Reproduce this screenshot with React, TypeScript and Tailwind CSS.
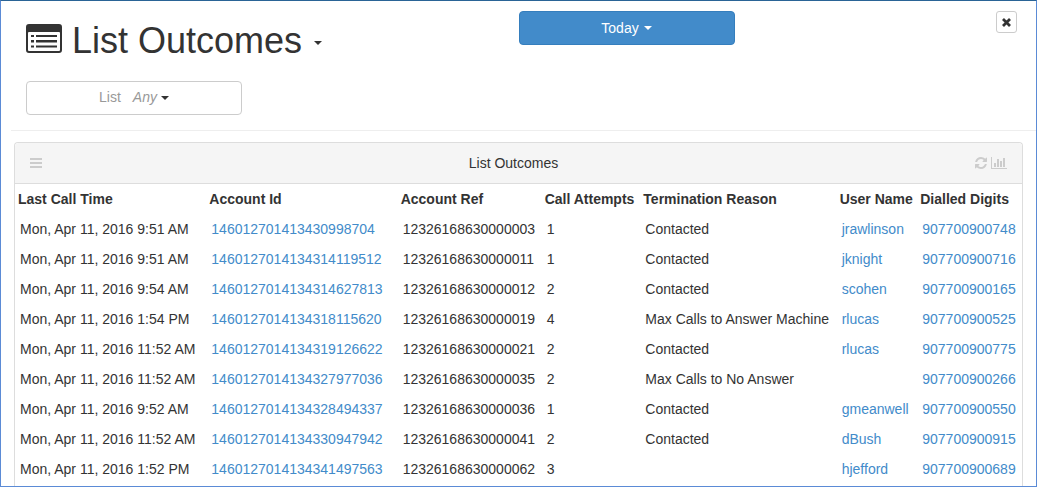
import React from 'react';

interface Outcome {
  time: string;
  accountId: string;
  accountRef: string;
  attempts: number;
  reason: string;
  user: string;
  digits: string;
}

const outcomes: Outcome[] = [
  { time: 'Mon, Apr 11, 2016 9:51 AM', accountId: '146012701413430998704', accountRef: '12326168630000003', attempts: 1, reason: 'Contacted', user: 'jrawlinson', digits: '907700900748' },
  { time: 'Mon, Apr 11, 2016 9:51 AM', accountId: '1460127014134314119512', accountRef: '12326168630000011', attempts: 1, reason: 'Contacted', user: 'jknight', digits: '907700900716' },
  { time: 'Mon, Apr 11, 2016 9:54 AM', accountId: '1460127014134314627813', accountRef: '12326168630000012', attempts: 2, reason: 'Contacted', user: 'scohen', digits: '907700900165' },
  { time: 'Mon, Apr 11, 2016 1:54 PM', accountId: '1460127014134318115620', accountRef: '12326168630000019', attempts: 4, reason: 'Max Calls to Answer Machine', user: 'rlucas', digits: '907700900525' },
  { time: 'Mon, Apr 11, 2016 11:52 AM', accountId: '1460127014134319126622', accountRef: '12326168630000021', attempts: 2, reason: 'Contacted', user: 'rlucas', digits: '907700900775' },
  { time: 'Mon, Apr 11, 2016 11:52 AM', accountId: '1460127014134327977036', accountRef: '12326168630000035', attempts: 2, reason: 'Max Calls to No Answer', user: '', digits: '907700900266' },
  { time: 'Mon, Apr 11, 2016 9:52 AM', accountId: '1460127014134328494337', accountRef: '12326168630000036', attempts: 1, reason: 'Contacted', user: 'gmeanwell', digits: '907700900550' },
  { time: 'Mon, Apr 11, 2016 11:52 AM', accountId: '1460127014134330947942', accountRef: '12326168630000041', attempts: 2, reason: 'Contacted', user: 'dBush', digits: '907700900915' },
  { time: 'Mon, Apr 11, 2016 1:52 PM', accountId: '1460127014134341497563', accountRef: '12326168630000062', attempts: 3, reason: '', user: 'hjefford', digits: '907700900689' },
];

const columns = [
  { label: 'Last Call Time', width: 'w-[19%]' },
  { label: 'Account Id', width: 'w-[19%]' },
  { label: 'Account Ref', width: 'w-[14.3%]' },
  { label: 'Call Attempts', width: 'w-[9.8%]' },
  { label: 'Termination Reason', width: 'w-[19.5%]' },
  { label: 'User Name', width: 'w-[8%]' },
  { label: 'Dialled Digits', width: 'w-[10.4%]' },
];

const Caret = () => (
  <svg className="shrink-0" width="8" height="4" viewBox="0 0 8 4" fill="currentColor" aria-hidden="true">
    <path d="M0 0h8L4 4z" />
  </svg>
);

const ListIcon = () => (
  <svg className="shrink-0 mb-[5px]" width="36" height="29" viewBox="0 0 36 29" fill="currentColor" aria-hidden="true">
    <path fillRule="evenodd" d="M3 0h30a3 3 0 0 1 3 3v23a3 3 0 0 1-3 3H3a3 3 0 0 1-3-3V3a3 3 0 0 1 3-3zM3 8a1 1 0 0 0-1 1v17a1 1 0 0 0 1 1h30a1 1 0 0 0 1-1V9a1 1 0 0 0-1-1z" />
    <path d="M5 11h3v2H5zM10 11h21v2H10zM5 16h3v2.5H5zM10 16h21v2.5H10zM5 21.500h3v2H5zM10 21.500h21v2H10z" />
  </svg>
);

const RefreshIcon = () => (
  <svg width="12" height="12" viewBox="0 0 1536 1536" fill="currentColor" aria-hidden="true">
    <path d="M1511 928q0 5-1 7-64 268-268 434.500t-478 166.500q-146 0-282.500-55t-243.500-157l-129 129q-19 19-45 19t-45-19-19-45v-448q0-26 19-45t45-19h448q26 0 45 19t19 45-19 45l-137 137q71 66 161 102t187 36q134 0 250-65t186-179q11-17 53-117 8-23 30-23h192q13 0 22.500 9.500t9.500 22.500zm25-800v448q0 26-19 45t-45 19h-448q-26 0-45-19t-19-45 19-45l138-138q-148-137-349-137-134 0-250 65t-186 179q-11 17-53 117-8 23-30 23h-199q-13 0-22.500-9.500t-9.500-22.500v-7q65-268 270-434.500t480-166.500q146 0 284 55.500t245 156.500l130-129q19-19 45-19t45 19 19 45z" />
  </svg>
);

const ChartIcon = () => (
  <svg width="16" height="12" viewBox="0 0 16 12" fill="currentColor" aria-hidden="true">
    <path d="M0 0h1v11h15v1H0zM3 6h2v4H3zM6 2h2v8H6zM9 4h2v6H9zM12 1h2v9h-2z" />
  </svg>
);

const MenuIcon = () => (
  <svg width="12" height="10" viewBox="0 0 12 10" fill="currentColor" aria-hidden="true">
    <path d="M0 0h12v2H0zM0 4h12v2H0zM0 8h12v2H0z" />
  </svg>
);

const CloseIcon = () => (
  <svg width="9" height="9" viewBox="0 0 9 9" stroke="currentColor" strokeWidth="2.800" aria-hidden="true">
    <path d="M1 1l7 7M8 1l-7 7" />
  </svg>
);

const CellLink = ({ text }: { text: string }) => (
  <a href="#" className="text-[#428bca] hover:underline">{text}</a>
);

export default function App() {
  return (
    <div className="bg-white font-['Liberation_Sans',Arial,sans-serif] text-sm leading-5 text-[#333]">
      <div className="border border-[#5b8bd6] border-t-[#2a6496]">
        <header className="grid grid-cols-2 pt-[10px]">
          <div className="flex items-center gap-[10px] pl-[25px] h-[60px]">
            <ListIcon />
            <h1 className="text-4xl leading-10 whitespace-nowrap">List Outcomes</h1>
            <button type="button" aria-label="Choose report" className="pt-1 pl-[2px]">
              <Caret />
            </button>
          </div>
          <div className="flex items-start justify-between pr-[19px]">
            <button type="button" className="flex items-center justify-center gap-[5px] w-[216px] h-[34px] rounded border border-[#357ebd] bg-[#428bca] text-white">
              Today <Caret />
            </button>
            <button type="button" aria-label="Close" className="flex items-center justify-center w-[21px] h-[22px] rounded-[3px] border border-[#ccc]">
              <CloseIcon />
            </button>
          </div>
        </header>

        <div className="pl-[25px] pt-[10px] pb-[15px]">
          <button type="button" className="flex items-center justify-center gap-1 w-[216px] h-[34px] rounded border border-[#ccc]">
            <span className="pb-[2px] text-[#999]">List</span>
            <em className="pb-[2px] pl-2 text-[#999]">Any</em>
            <Caret />
          </button>
        </div>
        <hr className="ml-[10px] border-[#eee]" />

        <section className="mx-[13px] mt-[11px] pb-[2px] rounded-t border border-b-0 border-[#ddd]">
          <div className="flex items-center justify-between h-[41px] px-[15px] rounded-t border-b border-[#ddd] bg-[#f5f5f5]">
            <button type="button" aria-label="Menu" className="text-[#ccc]">
              <MenuIcon />
            </button>
            <h2 className="pl-[10px]">List Outcomes</h2>
            <div className="flex gap-1 text-[#ccc]">
              <button type="button" aria-label="Refresh"><RefreshIcon /></button>
              <button type="button" aria-label="Chart"><ChartIcon /></button>
            </div>
          </div>

          <table className="w-full table-fixed border-collapse text-left whitespace-nowrap">
            <thead>
              <tr className="h-[30px]">
                {columns.map(col => (
                  <th key={col.label} scope="col" className={`${col.width} pl-[3px] font-bold`}>{col.label}</th>
                ))}
              </tr>
            </thead>
            <tbody>
              {outcomes.map(row => (
                <tr key={row.accountId} className="h-[30px]">
                  <td className="pl-[5px]">{row.time}</td>
                  <td className="pl-[5px]"><CellLink text={row.accountId} /></td>
                  <td className="pl-[5px]">{row.accountRef}</td>
                  <td className="pl-[5px]">{row.attempts}</td>
                  <td className="pl-[5px]">{row.reason}</td>
                  <td className="pl-[5px]">{row.user && <CellLink text={row.user} />}</td>
                  <td className="pl-[5px]"><CellLink text={row.digits} /></td>
                </tr>
              ))}
            </tbody>
          </table>
        </section>
      </div>
    </div>
  );
}
